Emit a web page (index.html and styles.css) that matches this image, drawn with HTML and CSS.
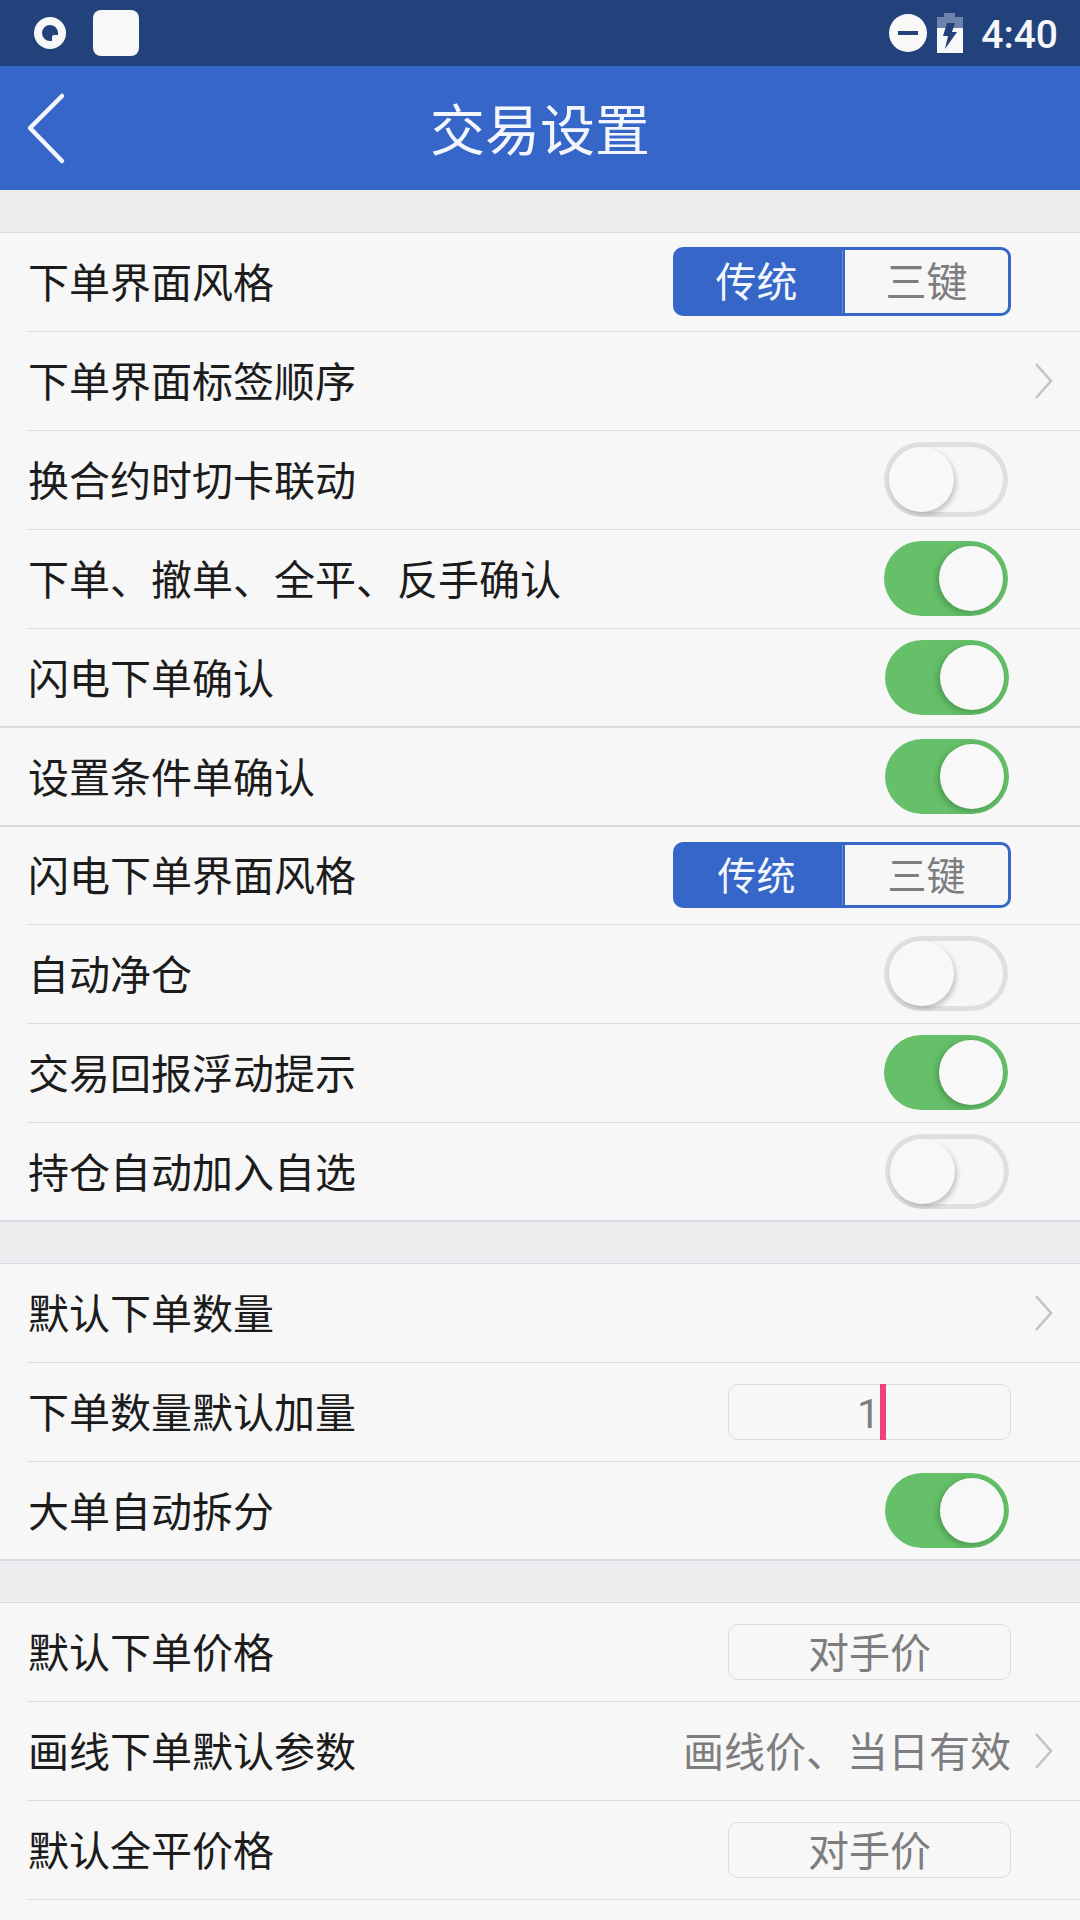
FILE: index.html
```html
<!DOCTYPE html>
<html lang="zh-CN">
<head>
    <meta charset="UTF-8">
    <meta name="viewport" content="width=device-width, initial-scale=1.0">
    <title>交易设置</title>
    <link rel="stylesheet" href="styles.css">
</head>
<body>
    <div class="status-bar">
        <svg class="icon-ring" width="32" height="32" viewBox="0 0 32 32">
            <circle cx="16" cy="16" r="16" fill="#f8f8f8"/>
            <path d="M16 8a8 8 0 0 1 8 8v2h-4q-2 0-2 2v4h-2a8 8 0 0 1 0-16z" fill="#23427c"/>
        </svg>
        <span class="icon-square"></span>
        <div class="status-right">
            <svg width="38" height="38" viewBox="0 0 38 38">
                <circle cx="19" cy="19" r="19" fill="#f8f8f8"/>
                <rect x="9" y="17" width="20" height="4" fill="#23427c"/>
            </svg>
            <svg class="battery" width="26" height="40" viewBox="0 0 26 40">
                <path d="M0 4h7V0h11v4h8v11H0z" fill="#6e83ac"/>
                <path d="M0 15h26v25H0z" fill="#f8f8f8"/>
                <path d="M10 10h8l-3 9h5L8 36l3-13H6z" fill="#23427c"/>
            </svg>
            <span class="time">4:40</span>
        </div>
    </div>
    <header class="header">
        <svg class="back" width="40" height="74" viewBox="0 0 40 74">
            <path d="M36 5L4 37l32 33" fill="none" stroke="#f3f6fc" stroke-width="4.5" stroke-linecap="round" stroke-linejoin="round"/>
        </svg>
        <h1>交易设置</h1>
    </header>

    <div class="section">
        <div class="row">
            <span class="label">下单界面风格</span>
            <div class="segment"><span class="active">传统</span><span>三键</span></div>
        </div>
        <div class="row">
            <span class="label">下单界面标签顺序</span>
            <svg class="arrow" width="20" height="40" viewBox="0 0 20 40"><path d="M2 3l15 17L2 37"/></svg>
        </div>
        <div class="row">
            <span class="label">换合约时切卡联动</span>
            <div class="switch"><i></i></div>
        </div>
        <div class="row">
            <span class="label">下单、撤单、全平、反手确认</span>
            <div class="switch on"><i></i></div>
        </div>
        <div class="row full">
            <span class="label">闪电下单确认</span>
            <div class="switch on shifted"><i></i></div>
        </div>
        <div class="row full">
            <span class="label">设置条件单确认</span>
            <div class="switch on shifted"><i></i></div>
        </div>
        <div class="row short">
            <span class="label">闪电下单界面风格</span>
            <div class="segment small"><span class="active">传统</span><span>三键</span></div>
        </div>
        <div class="row">
            <span class="label">自动净仓</span>
            <div class="switch"><i></i></div>
        </div>
        <div class="row">
            <span class="label">交易回报浮动提示</span>
            <div class="switch on"><i></i></div>
        </div>
        <div class="row full">
            <span class="label">持仓自动加入自选</span>
            <div class="switch shifted"><i></i></div>
        </div>
    </div>

    <div class="section">
        <div class="row">
            <span class="label">默认下单数量</span>
            <svg class="arrow" width="20" height="40" viewBox="0 0 20 40"><path d="M2 3l15 17L2 37"/></svg>
        </div>
        <div class="row">
            <span class="label">下单数量默认加量</span>
            <div class="field number">1<span class="caret"></span></div>
        </div>
        <div class="row full">
            <span class="label">大单自动拆分</span>
            <div class="switch on shifted"><i></i></div>
        </div>
    </div>

    <div class="section">
        <div class="row">
            <span class="label">默认下单价格</span>
            <div class="field">对手价</div>
        </div>
        <div class="row">
            <span class="label">画线下单默认参数</span>
            <span class="value">画线价、当日有效</span>
            <svg class="arrow" width="20" height="40" viewBox="0 0 20 40"><path d="M2 3l15 17L2 37"/></svg>
        </div>
        <div class="row">
            <span class="label">默认全平价格</span>
            <div class="field">对手价</div>
        </div>
        <div class="row"></div>
    </div>
</body>
</html>
```
FILE: styles.css
```css
* {
    box-sizing: border-box;
}
body {
    margin: 0;
    width: 1080px;
    height: 1920px;
    overflow: hidden;
    background: #eeeef0;
    font-family: Roboto, "Noto Sans CJK SC", sans-serif;
    color: #1c1c1c;
}
svg {
    display: block;
    flex: none;
}

/* status bar */
.status-bar {
    height: 66px;
    background: #23427c;
    display: flex;
    align-items: center;
    padding: 0 22px 0 34px;
}
.icon-square {
    width: 46px;
    height: 46px;
    margin-left: 27px;
    border-radius: 8px;
    background: #f8f8f8;
}
.status-right {
    margin-left: auto;
    display: flex;
    align-items: center;
    height: 66px;
}
.battery {
    margin-left: 10px;
}
.time {
    margin-left: 18px;
    padding-top: 3px;
    font-size: 39px;
    font-weight: 500;
    line-height: 64px;
    color: #f5f7fb;
}

/* title bar */
.header {
    height: 124px;
    background: #3666c8;
    display: flex;
    align-items: center;
    padding: 0 26px;
}
.header h1 {
    flex: 1;
    margin: 5px 40px 0 0;
    text-align: center;
    font-size: 55px;
    font-weight: 400;
    line-height: 100px;
    color: #f3f6fc;
}

/* settings list */
.section {
    margin-top: 41px;
    border-top: 1px solid #dadbe2;
    background: #f7f7f7;
}
.header + .section {
    margin-top: 42px;
}
.row {
    height: 99px;
    display: flex;
    align-items: center;
    padding: 0 69px 2px 28px;
    background: linear-gradient(#dadbe2, #dadbe2) no-repeat 27px 100% / 100% 1px;
}
.row.full {
    background-position: 0 100%;
    background-size: 100% 2px;
}
.row.short {
    height: 98px;
}
.label {
    flex: 1;
    margin-top: 5px;
    font-size: 41px;
    line-height: 60px;
}
.row.short .label {
    margin-top: 4px;
}
.value {
    margin-top: 5px;
    font-size: 41px;
    line-height: 60px;
    color: #7d7d80;
}
.arrow {
    margin-right: -43px;
    margin-left: 23px;
}
.arrow path {
    fill: none;
    stroke: #c0c3cc;
    stroke-width: 2.5;
}

.segment {
    width: 338px;
    height: 69px;
    display: flex;
    border: 3px solid #3666c8;
    border-radius: 10px;
    font-size: 41px;
    line-height: 66px;
    text-align: center;
    color: #7d7d80;
}
.segment.small {
    height: 66px;
    font-size: 39px;
    line-height: 64px;
}
.segment span {
    flex: 1;
    border-left: 2px solid #3666c8;
}
.segment .active {
    flex: 0 0 167px;
    padding-right: 5px;
    border-left: none;
    border-right: 1px solid #6c8fda;
    background: #3666c8;
    color: #f3f6fc;
}

.switch {
    width: 124px;
    height: 75px;
    margin-right: 3px;
    padding: 5px;
    border-radius: 38px;
    box-shadow: inset 0 0 0 5px #dfdfdf;
    overflow: hidden;
}
.switch i {
    display: block;
    width: 65px;
    height: 65px;
    border-radius: 50%;
    background: #f8f8f8;
    box-shadow: 2px 3px 5px rgba(90, 95, 110, 0.35);
}
.switch.on {
    background: #65c069;
    box-shadow: none;
}
.switch.on i {
    width: 64px;
    margin-left: auto;
    box-shadow: -2px 2px 6px rgba(20, 70, 25, 0.35);
}
.switch.shifted {
    margin-right: 2px;
}

.field {
    width: 283px;
    height: 56px;
    display: flex;
    align-items: center;
    justify-content: center;
    margin-top: 1px;
    padding-top: 4px;
    border: 1px solid #dadbe2;
    border-radius: 10px;
    font-size: 41px;
    line-height: 50px;
    color: #7d7d80;
}
.field.number {
    padding-left: 4px;
}
.caret {
    align-self: flex-start;
    width: 6px;
    height: 56px;
    margin-top: -5px;
    background: #f04080;
}
```
